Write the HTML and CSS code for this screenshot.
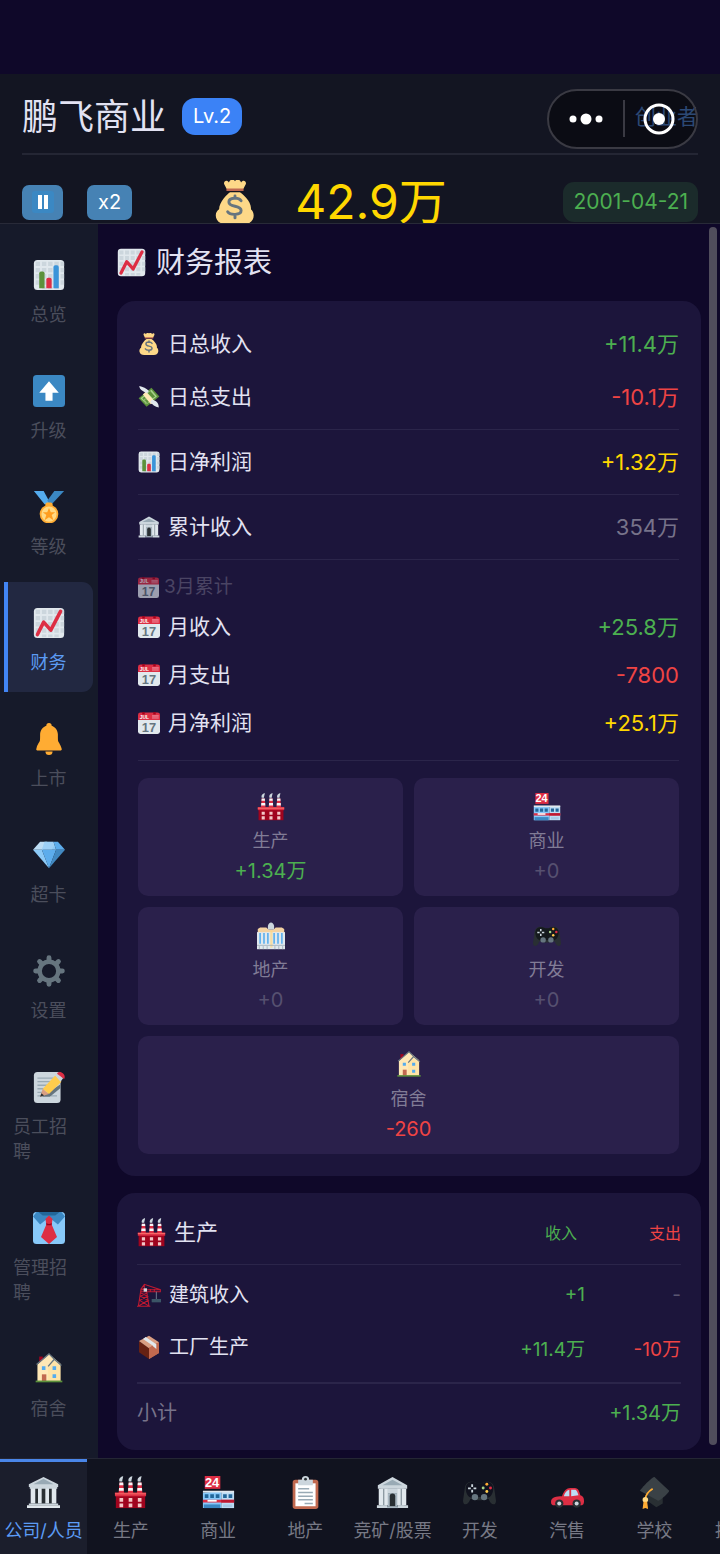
FILE: index.html
```html
<!DOCTYPE html>
<html lang="zh-CN">
<head>
<meta charset="utf-8">
<meta name="viewport" content="width=device-width, initial-scale=1">
<title>鹏飞商业</title>
<link rel="stylesheet" href="styles.css">
</head>
<body>
<svg class="sprite" aria-hidden="true">
  <symbol id="i-panel" viewBox="0 0 36 36">
    <rect x="1" y="1" width="34" height="34" rx="4" fill="#e1e8ed"/>
    <g fill="#ccd6dd"><path d="M3 3h5v5H3zM10 3h5v5h-5zM17 3h5v5h-5zM24 3h5v5h-5zM31 3h4v5h-4zM3 10h5v5H3zM10 10h5v5h-5zM17 10h5v5h-5zM24 10h5v5h-5zM31 10h4v5h-4zM3 17h5v5H3zM10 17h5v5h-5zM17 17h5v5h-5zM24 17h5v5h-5zM31 17h4v5h-4zM3 24h5v5H3zM10 24h5v5h-5zM17 24h5v5h-5zM24 24h5v5h-5zM31 24h4v5h-4zM10 31h5v3h-5zM17 31h5v3h-5zM24 31h5v3h-5z"/></g>
  </symbol>
  <symbol id="i-bars" viewBox="0 0 36 36">
    <use href="#i-panel"/>
    <path fill="#5c913b" d="M7 16a2 2 0 0 1 2-2h2a2 2 0 0 1 2 2v17H7z"/>
    <path fill="#dd2e44" d="M15 23a2 2 0 0 1 2-2h2a2 2 0 0 1 2 2v10h-6z"/>
    <path fill="#3b94d9" d="M23 9a2 2 0 0 1 2-2h2a2 2 0 0 1 2 2v24h-6z"/>
  </symbol>
  <symbol id="i-trend" viewBox="0 0 36 36">
    <use href="#i-panel"/>
    <path fill="none" stroke="#dd2e44" stroke-width="4" stroke-linecap="round" stroke-linejoin="round" d="M5 31l7-14 8 9L31 5"/>
  </symbol>
  <symbol id="i-up" viewBox="0 0 36 36">
    <rect width="36" height="36" rx="4" fill="#3b88c3"/>
    <path fill="#fff" d="M18 7L7 20h7v9h8v-9h7z"/>
  </symbol>
  <symbol id="i-medal" viewBox="0 0 36 36">
    <path fill="#55acee" d="M1 0l12 15h7L12 0z"/><path fill="#3b88c3" d="M24 0l-8 11 4 5L35 0z"/>
    <rect x="14" y="13" width="8" height="5" rx="2" fill="#ffac33"/>
    <circle cx="18" cy="26" r="10.500" fill="#ffac33"/><circle cx="18" cy="26" r="8.500" fill="#ffd983"/>
    <path fill="#ff9d1f" d="M18 19l2 5h5l-4 3 2 6-5-3.500-5 3.500 2-6-4-3h5z"/>
  </symbol>
  <symbol id="i-bell" viewBox="0 0 36 36">
    <path fill="#ffac33" d="M28 13c0 11 0 5 4 15 1 2 0 3-2 3H6c-2 0-3-1-2-3 4-10 4-4 4-15 0-5 3.500-9 7-10a3 3 0 0 1 6 0c3.500 1 7 5 7 10zM14 32h8a4 4 0 0 1-8 0z"/>
  </symbol>
  <symbol id="i-gem" viewBox="0 0 36 36">
    <path fill="#bdddf4" d="M8 3h8l-5 9H0z"/><path fill="#8ccaf7" d="M13 3h10l3 9H10z"/><path fill="#5dadec" d="M23 3h5l8 9H26z"/>
    <path fill="#bdddf4" d="M13 3h10l1 4-3 5H10z" opacity=".35"/>
    <path fill="#8ccaf7" d="M0 12h10l8 21z"/><path fill="#5dadec" d="M10 12h16l-8 21z"/><path fill="#4289c1" d="M26 12h10L18 33z"/>
  </symbol>
  <symbol id="i-gear" viewBox="0 0 36 36">
    <circle cx="18" cy="18" r="10.500" fill="none" stroke="#66757f" stroke-width="5"/>
    <g stroke="#66757f" stroke-width="5.500" stroke-linecap="round"><path d="M18 3v3M18 30v3M3 18h3M30 18h3M7.400 7.400l2.200 2.200M26.400 26.400l2.200 2.200M28.600 7.400l-2.200 2.200M9.600 26.400l-2.200 2.200"/></g>
  </symbol>
  <symbol id="i-memo" viewBox="0 0 36 36">
    <rect x="1" y="1" width="30" height="35" rx="4" fill="#ccd6dd"/>
    <path stroke="#99aab5" stroke-width="1.500" d="M5 8h18M5 12h15M5 16h11M5 20h9M5 24h7M5 28h8M20 28h7"/>
    <path fill="#66757f" d="M10 29l21-14v4L19 29z"/>
    <path fill="#d99e82" d="M8 29l3-9 7 6z"/><path fill="#292f33" d="M8 29l1.500-4 3 2.500z"/>
    <path fill="#ffcc4d" d="M11 20L25 5l7 7-14 14z"/><path fill="#ccd6dd" d="M25 5l3-3 6 6-3 4z"/><path fill="#dd2e44" d="M27 3c3-5 11 1 8 6z"/>
  </symbol>
  <symbol id="i-tie" viewBox="0 0 36 36">
    <rect width="36" height="36" rx="4" fill="#88c9f9"/><path fill="#3b88c3" d="M4 0h28l4 5-8 9-10-8-10 8-8-9z"/><path fill="#226699" d="M6 0h24l-5 4H11z"/>
    <path fill="#dd2e44" d="M14 8l4-4 4 4-1 6 6 14-9 8-9-8 6-14z"/><path fill="#a0041e" d="M15 12c2 2 4 2 6 0v3h-6z"/>
  </symbol>
  <symbol id="i-house" viewBox="0 0 36 36">
    <path fill="#a0041e" d="M7 4h4v9H7z"/><path fill="#ffe8b6" d="M5 13L18 1l13 11v20H5z"/><path fill="#ffd983" d="M17 16l6-7 8 5v18H17z" opacity=".3"/>
    <path fill="none" stroke="#66757f" stroke-width="1.500" d="M4 13L18 1l6 6-7 8M24 7l8 7"/>
    <path fill="#c1694f" d="M10 24h5v8h-5z"/><path fill="#55acee" d="M10 15h4v4h-4zM22 15h4v4h-4zM22 24h4v4h-4z"/><path fill="#5c913b" d="M3 31h30v2H3z"/>
  </symbol>
  <symbol id="i-bag" viewBox="0 0 36 36">
    <path fill="#fdd888" d="M31 24c1-6-7-13-9-14h-8c-2 1-9 8-9 14-5 3-3 12 5 12h16c8 0 9-9 5-12z"/>
    <path fill="#bf6952" d="M11 6h14v3H11z"/>
    <path fill="#fdd888" d="M11 7L9 3c0-3 3-3 4-1 1-3 4-3 5-1 1-2 4-2 5 1 1-2 4-2 4 1l-2 4z"/>
    <path fill="none" stroke="#67757f" stroke-width="2.400" stroke-linecap="round" d="M23 17c-2-3-10-3-10 1 0 5 10 2 10 7 0 4-9 4-11 1M18 13v2M18 29v2"/>
  </symbol>
  <symbol id="i-fly" viewBox="0 0 36 36">
    <path fill="#5c913b" d="M1 20L22 3l13 14-21 17z"/><path fill="#a7d28b" d="M4 20L22 6l9 11-17 13z"/><path fill="#5c913b" d="M7 20l4-3 8 8-5 4zM20 8l8 9-4 3-8-8z"/>
    <path fill="#ffe8b6" d="M13 9l15 17-7 4L8 14z"/>
    <path fill="#e1e8ed" d="M15 12C9 9 3 7 2 0c6 1 12 4 16 8zM23 22c5 2 11 4 11 13-6-1-11-5-14-9z"/>
    <path fill="none" stroke="#a7d28b" stroke-width="1.500" d="M14 22c-2-2-5 0-3 2s4 3 1 4"/>
  </symbol>
  <symbol id="i-bank" viewBox="0 0 36 36">
    <path fill="#66757f" d="M5 12h26v21H5z"/><path fill="#ccd6dd" d="M2 10L18 1l16 9v4H2z"/><path fill="#99aab5" d="M7 10l11-6 11 6z"/>
    <path fill="#e1e8ed" d="M3 14h5v18H3zM9 14h4v18H9zM23 14h4v18h-4zM28 14h5v18h-5z"/><path fill="#ccd6dd" d="M13 14h10v5H13z"/><path fill="#aab8c2" d="M13 19h10v14H13z"/>
    <path fill="#292f33" d="M15 33V22a3 3 0 0 1 6 0v11z"/><path fill="#ccd6dd" d="M1 32h11v3H1zM24 32h11v3H24z"/><path fill="#aab8c2" d="M12 33h12v2H12z"/>
  </symbol>
  <symbol id="i-hall" viewBox="0 0 36 36">
    <path fill="#292f33" d="M5 12h26v19H5z"/><path fill="#ccd6dd" d="M2 9L18 1l16 8v3H2z"/><path fill="#99aab5" d="M7 9l11-6 11 6z"/>
    <path fill="#e1e8ed" d="M4 12h5v18H4zM12 12h4v18h-4zM20 12h4v18h-4zM27 12h5v18h-5z"/><path fill="#ccd6dd" d="M3 12h30v2H3zM2 30h32v2H2z"/><path fill="#e1e8ed" d="M0 32h36v3H0z"/>
  </symbol>
  <symbol id="i-calendar" viewBox="0 0 36 36">
    <path fill="#e1e8ed" d="M0 10h36v22a4 4 0 0 1-4 4H4a4 4 0 0 1-4-4z"/><path fill="#dd2e44" d="M0 5a4 4 0 0 1 4-4h28a4 4 0 0 1 4 4v8H0z"/>
    <path fill="#a0041e" d="M7 0h4v4H7zM25 0h4v4h-4z"/>
    <path stroke="#f4abba" stroke-width="1" d="M23 6h11M23 8h11M23 10h11"/>
    <text class="glyph" x="3" y="11" font-size="8" fill="#fff">JUL</text><text class="glyph" x="18" y="32" font-size="21" text-anchor="middle" fill="#66757f">17</text>
  </symbol>
  <symbol id="i-factory" viewBox="0 0 36 36">
    <g id="i-stack"><path fill="#dd2e44" d="M6 7h4l1 12H5z"/><path fill="#f5f8fa" d="M6 7h4l.3 3H5.700zM5.500 13h5l.2 3H5.300z"/><path fill="#ccd6dd" d="M6 6c-1-3 1-5 4-6 0 2-1 4-1 6z"/></g>
    <use href="#i-stack" x="10"/><use href="#i-stack" x="20"/>
    <path fill="#a0041e" d="M2 20h32v15H2z"/><path fill="#dd2e44" d="M1 18h34v4H1z"/><path fill="#ff8376" d="M1 19h34v1H1z"/>
    <path fill="#f4c7c7" d="M6 24h4v4H6zM16 24h4v4h-4zM26 24h4v4h-4zM6 30h4v4H6zM16 30h4v4h-4zM26 30h4v4h-4z"/>
  </symbol>
  <symbol id="i-store" viewBox="0 0 36 36">
    <rect x="3" width="17" height="14" fill="#dd2e44"/><text class="glyph" x="11" y="12" font-size="14" text-anchor="middle" fill="#fff">24</text>
    <path fill="#88c9f9" d="M1 18l20-1v18H1z"/><path fill="#bdddf4" d="M21 17h14v18H21z"/><path fill="#e1e8ed" d="M1 16h34v2H1z"/>
    <path fill="#226699" d="M3 20h4v4H3zM9 20h4v4H9zM15 20h4v4h-4zM23 20h4v4h-4zM29 20h4v4h-4z"/><path fill="#dd2e44" d="M1 26h34v3H1z"/><path fill="#be1931" d="M21 26h14v3H21z"/><path fill="#3b88c3" d="M2 31h18v4H2z"/><path fill="#fff" d="M6 26h10v2H6z"/><path fill="#a7c9e6" d="M23 31h10v3H23z"/>
  </symbol>
  <symbol id="i-city" viewBox="0 0 36 36">
    <path fill="#ccd6dd" d="M14 10V5c1-6 7-6 8 0v5z"/><path fill="#f3d2a2" d="M1 9l3-2h8l3 3h6l3-3h8l3 2v6H1z"/><path fill="#e1e8ed" d="M0 13h36v22H0z"/>
    <path stroke="#55acee" stroke-width="2" d="M4 14v14M9 14v14M14 14v14M22 14v14M27 14v14M32 14v14"/><path fill="#ffd983" d="M17 11h3v22h-3z" opacity=".7"/><path stroke="#99aab5" d="M0 30h36M3 31v4M8 31v4M13 31v4M23 31v4M28 31v4M33 31v4"/>
  </symbol>
  <symbol id="i-pad" viewBox="0 0 36 36">
    <path fill="#292f33" d="M2 13c1-8 9-8 14-5h4c5-3 13-3 14 5l2 14c0 6-6 5-8-2h-3c-4 2-10 2-14 0H8C6 32 0 33 0 27z"/>
    <path fill="var(--pad-face, #151a1d)" d="M3 13C4 5 12 6 16 8h4c4-2 12-3 13 5 0 12-9 12-12 10h-6c-3 2-12 2-12-10z"/>
    <path stroke="#ccd6dd" stroke-width="2" d="M10 9v3M10 15v3M5.500 13.500h3M11.500 13.500h3"/><circle cx="13" cy="23" r="3.500" fill="#66757f"/><circle cx="23" cy="23" r="3.500" fill="#66757f"/>
    <circle cx="26" cy="9" r="1.600" fill="#ffac33"/><circle cx="30" cy="13" r="1.600" fill="#dd2e44"/><circle cx="22" cy="13" r="1.600" fill="#a6d388"/><circle cx="26" cy="17" r="1.600" fill="#ffcc4d"/>
  </symbol>
  <symbol id="i-crane" viewBox="0 0 36 36">
    <path fill="none" stroke="#be1931" stroke-width="1.600" d="M2 35L6 9h8l4 26M6 15l10 5-12 6 13 8M15 15L5 20l12 6-14 8M6 9l5-7 24 8v3H6v-3h29M20 9v4M26 9v4M11 2v6M0 35h20"/>
    <path stroke="#99aab5" d="M29 13v11"/><path fill="#3b5566" d="M22 24h14v5H22z"/><path fill="#ccd6dd" d="M10 8h5v5h-5z"/>
  </symbol>
  <symbol id="i-box" viewBox="0 0 36 36">
    <path fill="#662113" d="M3 9l15 10v17L3 26z"/><path fill="#c1694f" d="M33 11L18 19v17l15-9z"/><path fill="#d99e82" d="M3 9L18 1l15 10-15 9z"/>
    <path fill="#c1694f" d="M18 19l15-8v16l-15 9z"/><path fill="#e1e8ed" d="M9 6l4-3 16 11v7l-5-4v-1z"/>
  </symbol>
  <symbol id="i-clip" viewBox="0 0 36 36">
    <rect x="4" y="4" width="28" height="32" rx="3" fill="#c1694f"/><path fill="#fff" d="M7 8h22v25H7z"/>
    <path fill="#ccd6dd" d="M10 4h4a4 4 0 0 1 8 0h4v6H10z"/><circle cx="18" cy="3.500" r="1.500" fill="#292f33"/><path stroke="#99aab5" stroke-width="1.600" d="M10 14h12M10 18h16M10 22h16M10 26h16M17 30h9"/>
  </symbol>
  <symbol id="i-car" viewBox="0 0 36 36">
    <path fill="#dd2e44" d="M12 22c2-6 5-9 9-9h5c4 0 5 4 6 8 3 1 4 3 4 6 0 4-1 5-4 5H4c-3 0-4-1-4-4 0-5 6-6 12-6z"/>
    <path fill="#bdddf4" d="M14 22c1-4 3-6 6-7v7zM22 15h4c2 0 3 3 4 6l-8 1z"/>
    <circle cx="9" cy="30" r="4.500" fill="#292f33"/><circle cx="28" cy="30" r="4.500" fill="#292f33"/><circle cx="9" cy="30" r="2.200" fill="#ccd6dd"/><circle cx="28" cy="30" r="2.200" fill="#ccd6dd"/>
  </symbol>
  <symbol id="i-cap" viewBox="0 0 36 36">
    <path fill="#292f33" d="M10 15l17 8v7l-7 4-10-7z"/><path fill="#3a4146" d="M18 1l16 15c0 2-9 10-12 11L2 16c2-3 13-15 16-15z"/>
    <path fill="none" stroke="#ffac33" stroke-width="2" d="M16 14c-5 3-8 6-8 12"/><circle cx="8" cy="26" r="3" fill="#ffd983"/><path fill="#ffac33" d="M6 28h4l1 8-3-1-3 1z"/>
  </symbol>
  <symbol id="i-cup" viewBox="0 0 36 36"><path fill="#ffac33" d="M9 3h18v10c0 8-4 11-7 12v5h5v4H11v-4h5v-5c-3-1-7-4-7-12z"/></symbol>
</svg>

<div class="app">
  <header class="top">
    <div class="brand">
      <h1 class="brand-name">鹏飞商业</h1>
      <span class="level">Lv.2</span>
      <span class="rank">创业者</span>
    </div>
    <div class="status">
      <button class="ctl" aria-label="暂停"><svg class="pause" viewBox="0 0 22 22"><rect width="22" height="22" rx="3" fill="#3b88c3"/><path fill="#fff" d="M6 4h4v14H6zM12 4h4v14h-4z"/></svg></button>
      <button class="ctl">x2</button>
      <div class="cash"><svg class="cash-icon"><use href="#i-bag"/></svg><span>42.9万</span></div>
      <time class="date" datetime="2001-04-21">2001-04-21</time>
    </div>
    <div class="capsule">
      <button class="cap-btn" aria-label="更多"><svg viewBox="0 0 34 14" width="34" height="14"><g fill="#fff"><circle cx="4" cy="7" r="3.500"/><circle cx="17" cy="7" r="5.500"/><circle cx="30" cy="7" r="3.500"/></g></svg></button>
      <button class="cap-btn" aria-label="关闭"><svg viewBox="0 0 32 32" width="32" height="32"><circle cx="16" cy="16" r="14" fill="none" stroke="#fff" stroke-width="3"/><circle cx="16" cy="16" r="6" fill="#fff"/></svg></button>
    </div>
  </header>

  <div class="body">
    <nav class="side" aria-label="公司">
      <a class="side-item" href="#"><svg><use href="#i-bars"/></svg><span>总览</span></a>
      <a class="side-item" href="#"><svg><use href="#i-up"/></svg><span>升级</span></a>
      <a class="side-item" href="#"><svg><use href="#i-medal"/></svg><span>等级</span></a>
      <a class="side-item active" href="#" aria-current="page"><svg><use href="#i-trend"/></svg><span>财务</span></a>
      <a class="side-item" href="#"><svg><use href="#i-bell"/></svg><span>上市</span></a>
      <a class="side-item" href="#"><svg><use href="#i-gem"/></svg><span>超卡</span></a>
      <a class="side-item" href="#"><svg><use href="#i-gear"/></svg><span>设置</span></a>
      <a class="side-item" href="#"><svg><use href="#i-memo"/></svg><span>员工招聘</span></a>
      <a class="side-item" href="#"><svg><use href="#i-tie"/></svg><span>管理招聘</span></a>
      <a class="side-item" href="#"><svg><use href="#i-house"/></svg><span>宿舍</span></a>
    </nav>

    <main class="main">
      <h2 class="title"><svg><use href="#i-trend"/></svg>财务报表</h2>

      <section class="card summary">
        <dl class="daily">
          <div class="row"><dt><svg><use href="#i-bag"/></svg>日总收入</dt><dd class="pos">+11.4万</dd></div>
          <div class="row"><dt><svg><use href="#i-fly"/></svg>日总支出</dt><dd class="neg">-10.1万</dd></div>
        </dl>
        <dl class="totals">
          <div class="row ruled"><dt><svg><use href="#i-bars"/></svg>日净利润</dt><dd class="net">+1.32万</dd></div>
          <div class="row ruled"><dt><svg><use href="#i-bank"/></svg>累计收入</dt><dd class="mute">354万</dd></div>
        </dl>
        <div class="monthly">
          <h3 class="month"><svg><use href="#i-calendar"/></svg>3月累计</h3>
          <dl>
            <div class="row tight"><dt><svg><use href="#i-calendar"/></svg>月收入</dt><dd class="pos">+25.8万</dd></div>
            <div class="row tight"><dt><svg><use href="#i-calendar"/></svg>月支出</dt><dd class="neg">-7800</dd></div>
            <div class="row tight"><dt><svg><use href="#i-calendar"/></svg>月净利润</dt><dd class="net">+25.1万</dd></div>
          </dl>
        </div>
        <div class="tiles">
          <div class="tile"><svg><use href="#i-factory"/></svg><span>生产</span><b class="pos">+1.34万</b></div>
          <div class="tile"><svg><use href="#i-store"/></svg><span>商业</span><b>+0</b></div>
          <div class="tile"><svg><use href="#i-city"/></svg><span>地产</span><b>+0</b></div>
          <div class="tile"><svg><use href="#i-pad"/></svg><span>开发</span><b>+0</b></div>
          <div class="tile wide"><svg><use href="#i-house"/></svg><span>宿舍</span><b class="neg">-260</b></div>
        </div>
      </section>

      <section class="card detail">
        <table>
          <thead><tr><th scope="col"><span class="cell-name head"><svg><use href="#i-factory"/></svg>生产</span></th><th scope="col" class="income pos">收入</th><th scope="col" class="neg">支出</th></tr></thead>
          <tbody>
            <tr class="first"><td><span class="cell-name"><svg><use href="#i-crane"/></svg>建筑收入</span></td><td class="pos">+1</td><td class="mute">-</td></tr>
            <tr class="last"><td><span class="cell-name"><svg><use href="#i-box"/></svg>工厂生产</span></td><td class="pos">+11.4万</td><td class="neg">-10万</td></tr>
          </tbody>
          <tfoot><tr><th scope="row">小计</th><td colspan="2" class="pos">+1.34万</td></tr></tfoot>
        </table>
      </section>
      <div class="thumb"></div>
    </main>
  </div>

  <nav class="tabs" aria-label="主导航">
    <a class="tab active" href="#" aria-current="page"><svg><use href="#i-hall"/></svg>公司/人员</a>
    <a class="tab" href="#"><svg><use href="#i-factory"/></svg>生产</a>
    <a class="tab" href="#"><svg><use href="#i-store"/></svg>商业</a>
    <a class="tab" href="#"><svg><use href="#i-clip"/></svg>地产</a>
    <a class="tab" href="#"><svg><use href="#i-bank"/></svg>竞矿/股票</a>
    <a class="tab" href="#"><svg><use href="#i-pad"/></svg>开发</a>
    <a class="tab" href="#"><svg><use href="#i-car"/></svg>汽售</a>
    <a class="tab" href="#"><svg><use href="#i-cap"/></svg>学校</a>
    <a class="tab" href="#"><svg><use href="#i-cup"/></svg>排行榜</a>
  </nav>
</div>
</body>
</html>
```
FILE: styles.css
```css
* { box-sizing: border-box; }
body {
  margin: 0;
  background: #0f0829;
  color: #e2e2f2;
  font-family: Inter, "Noto Sans CJK SC", sans-serif;
  font-weight: 400;
}
h1, h2, h3, dl, dd { margin: 0; font-weight: inherit; }
a { color: inherit; text-decoration: none; }
button { border: 0; padding: 0; font: inherit; color: inherit; background: none; }
svg { display: block; flex: none; }
.sprite { display: none; }
.glyph { font-family: "Liberation Sans", sans-serif; font-weight: 700; }

.app { display: flex; flex-direction: column; height: 100vh; padding-top: 74px; overflow: hidden; }

/* header */
.top { position: relative; flex: none; background: #131522; border-bottom: 1px solid #282a38; padding: 0 22px; }
.brand { display: flex; align-items: center; height: 81px; padding-top: 6px; border-bottom: 2px solid #242634; }
.brand-name { font-size: 36px; line-height: 48px; }
.level { margin-left: 16px; padding: 0 11px; border-radius: 13px; background: #3b82f6; color: #fff; font-size: 20px; line-height: 37px; }
.rank { margin-left: auto; font-size: 21px; line-height: 30px; color: #5c9cf5; }
.status { display: flex; align-items: center; height: 68px; padding-top: 26px; overflow: hidden; }
.ctl { display: flex; align-items: center; justify-content: center; min-width: 41px; height: 35px; padding: 0 11px; border-radius: 7px; background: #4682b4; color: #fff; font-size: 20px; }
.ctl:first-child { padding: 0; margin-right: 24px; }
.pause { width: 22px; height: 22px; }
.cash { display: flex; align-items: center; gap: 38px; margin-left: 81px; color: #ffd700; font-size: 48px; line-height: 60px; white-space: nowrap; }
.cash-icon { width: 44px; height: 44px; }
.date { margin-left: auto; padding: 0 10px; border-radius: 11px; background: #1b2b2b; color: #4caf50; font-size: 21px; line-height: 40px; }
.capsule { position: absolute; top: 15px; right: 22px; display: flex; width: 151px; height: 60px; border: 2px solid #3a3a43; border-radius: 30px; background: rgba(5, 5, 10, .55); }
.cap-btn { flex: 1; display: flex; align-items: center; justify-content: center; position: relative; }
.cap-btn + .cap-btn::before { content: ""; position: absolute; left: 0; top: 9px; width: 2px; height: 37px; background: #3a3a43; }

/* body */
.body { flex: 1; min-height: 0; display: flex; }
.side { flex: none; width: 98px; padding: 10px 5px 0 4px; display: flex; flex-direction: column; gap: 6px; overflow: hidden; background: #161a2a; color: #4b4e5c; }
.side-item { flex: none; display: flex; flex-direction: column; align-items: center; gap: 11px; padding: 25px 8px 17px 4px; border-left: 4px solid transparent; font-size: 18px; line-height: 25px; }
.side-item svg { width: 32px; height: 32px; }
.side-item span { max-width: 71px; }
.side-item.active { border-left-color: #4285f4; border-radius: 0 11px 11px 0; background: #222841; color: #5c9cf5; }

.main { position: relative; flex: 1; min-width: 0; padding: 17px 19px 7px; display: flex; flex-direction: column; gap: 17px; overflow: hidden; }
.title { display: flex; align-items: center; gap: 10px; font-size: 29px; line-height: 43px; }
.title svg { width: 29px; height: 29px; }
.thumb { position: absolute; top: 3px; right: 3px; bottom: 13px; width: 8px; border-radius: 4px; background: #504d5c; }

.card { flex: none; border-radius: 18px; background: #1c153b; }
.summary { padding: 16px 22px 22px 21px; }
.row { display: flex; align-items: center; justify-content: space-between; height: 53px; font-size: 21px; line-height: 28px; }
.row dt { display: flex; align-items: center; gap: 8px; }
.row svg { width: 22px; height: 22px; }
.row dd { font-size: 22px; }
.ruled { height: 65px; border-top: 1px solid #2b254a; }
.tight { height: 48px; }
.daily { padding-bottom: 6px; }
.monthly { padding: 11px 0 13px; border-top: 1px solid #2b254a; }
.month { display: flex; align-items: center; gap: 5px; font-size: 19px; line-height: 32px; color: #4a4463; }
.month svg { width: 21px; height: 21px; opacity: .65; }
.pos { color: #4caf50; }
.neg { color: #ef4444; }
.net { color: #ffd700; }
.mute { color: #77738a; }

.tiles { display: grid; grid-template-columns: 1fr 1fr; gap: 11px; padding-top: 17px; border-top: 1px solid #2b254a; }
.tile { display: flex; flex-direction: column; align-items: center; padding: 15px 10px 10px; border-radius: 10px; background: #2a204b; }
.tile svg { width: 28px; height: 28px; }
.tile span { margin-top: 6px; font-size: 18px; line-height: 28px; color: #817c96; }
.tile b { margin-top: 1px; font-size: 20px; font-weight: inherit; line-height: 30px; }
.tile b:not([class]) { color: #565070; }
.wide { grid-column: 1 / -1; }

.detail { padding: 8px 20px 11px; }
table { width: 100%; border-collapse: collapse; font-size: 20px; }
th, td { padding: 0; font-weight: inherit; text-align: right; }
th:first-child, td:first-child { text-align: left; }
th:nth-child(3), td:nth-child(3) { width: 96px; }
thead tr { height: 63px; border-bottom: 1px solid #2b254a; font-size: 16px; }
thead .income { padding-right: 8px; }
td { font-size: 19px; }
.cell-name { display: flex; align-items: center; gap: 8px; font-size: 20px; line-height: 28px; }
.cell-name svg { width: 24px; height: 24px; }
.head { font-size: 22px; }
.head svg { width: 29px; height: 29px; }
tbody tr { height: 53px; }
.first td { height: 57px; padding-top: 4px; }
.last td { height: 62px; padding-bottom: 9px; }
.detail .mute { color: #5a5571; }
tfoot tr { height: 56px; border-top: 2px solid #2b254a; }
tfoot th { color: #77738a; }
tfoot td { font-size: 20px; }

/* bottom tabs */
.tabs { --pad-face: #11131f; flex: none; display: flex; height: 96px; overflow: hidden; border-top: 1px solid #242634; background: #11131f; color: #777985; }
.tab { flex: 0 0 12.12%; display: flex; flex-direction: column; align-items: center; gap: 8px; padding-top: 14px; border-top: 3px solid transparent; font-size: 18px; line-height: 28px; white-space: nowrap; }
.tab svg { width: 33px; height: 33px; }
.tab.active { border-top-color: #4a86e8; background: #1b1e2c; color: #5c9cf5; }
```
